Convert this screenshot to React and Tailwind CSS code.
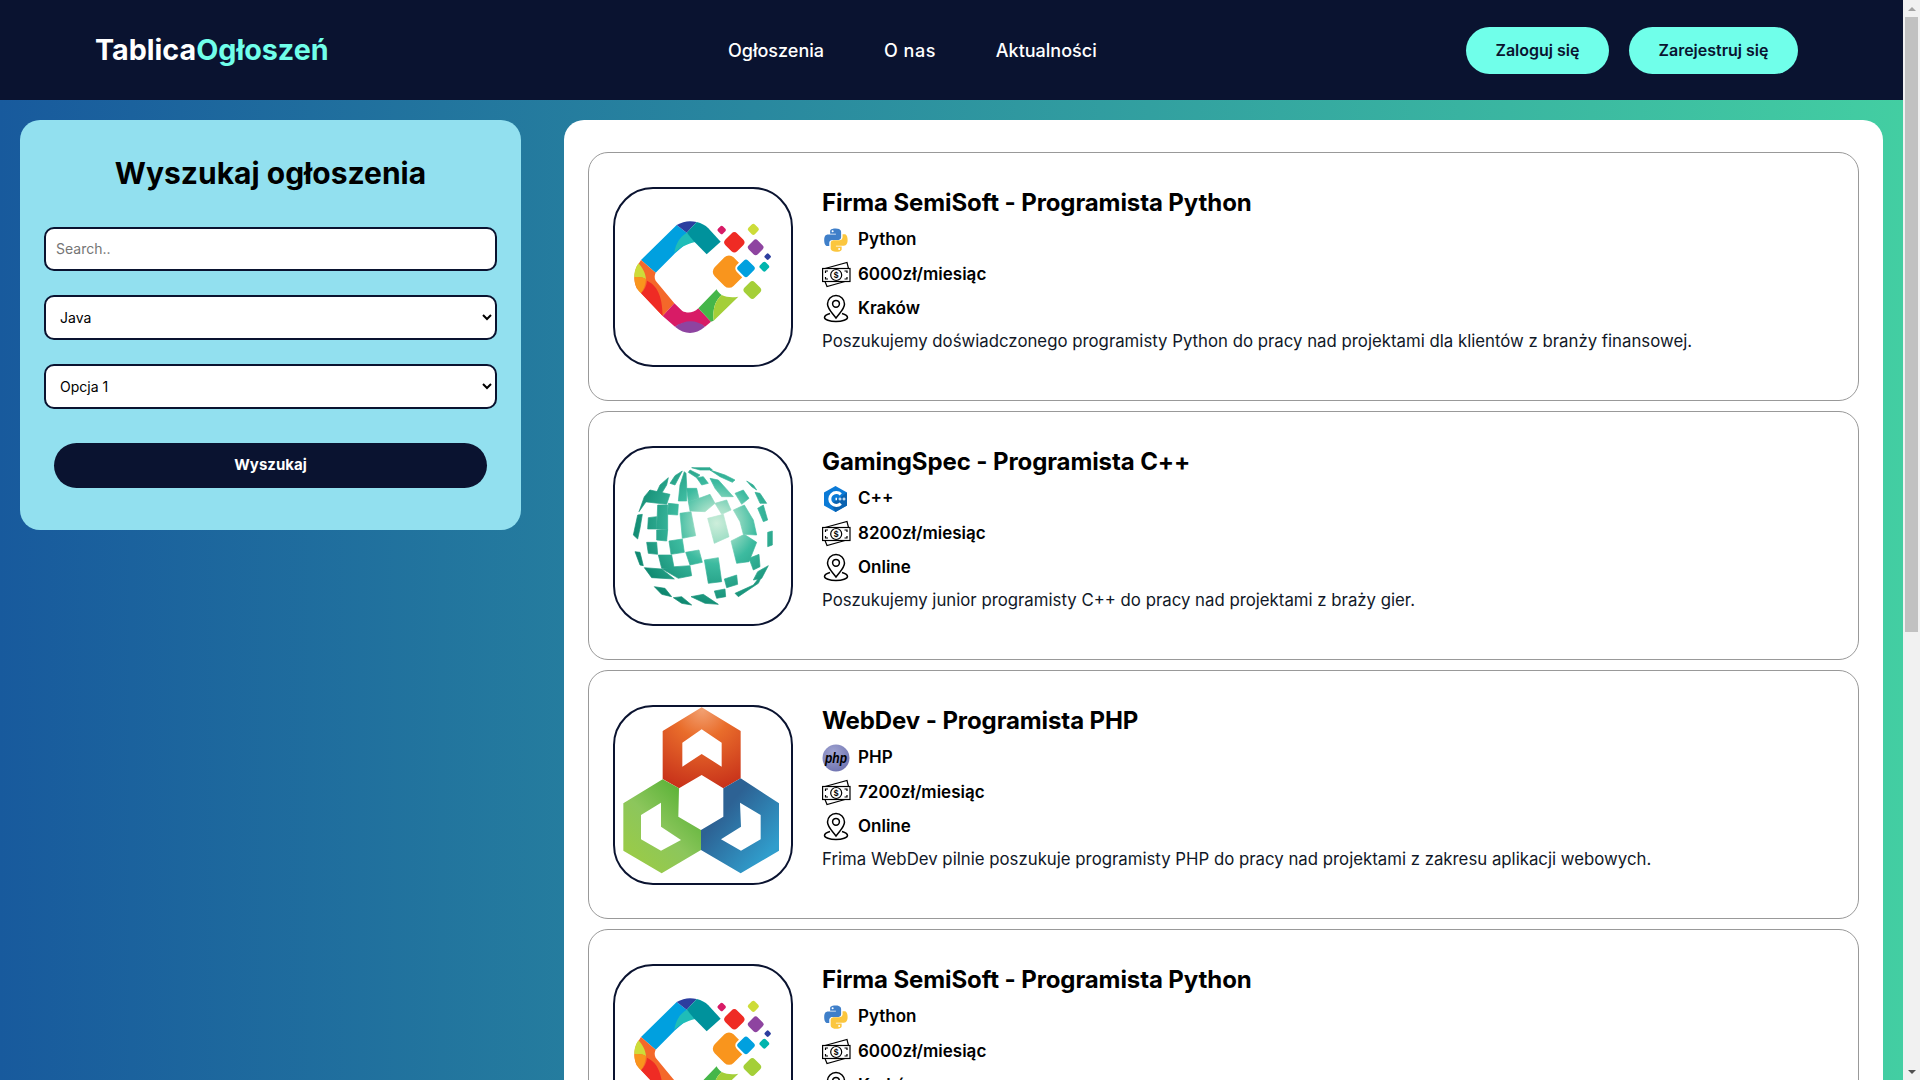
import React from "react";

function Diamond({ x, y, d, fill, stroke }) {
  const s = d * 1.6;
  return (
    <rect
      x={x - s / 2}
      y={y - s / 2}
      width={s}
      height={s}
      rx={s * 0.24}
      fill={fill}
      stroke={stroke}
      strokeWidth={stroke ? 6 : 0}
      transform={`rotate(45 ${x} ${y})`}
    />
  );
}

function SemiLogo() {
  return (
    <svg viewBox="-30 -63 528 528" className="block w-full h-full">
      <path d="M155 45 L48 150 L92 188 L150 130 L185 100 L205 92 L185 68 Z" fill="#00a0df" />
      <path d="M148 128 C152 100 165 80 185 68 L215 95 C195 98 170 108 148 128 Z" fill="#1fbdb8" />
      <path d="M155 45 C175 33 195 31 215 36 L185 68 Z" fill="#2c3e9f" />
      <path d="M215 36 C230 40 240 45 250 55 L287 95 L245 133 L208 95 L185 68 Z" fill="#00929c" />
      <path d="M48 150 L35 170 C26 190 26 215 35 235 L113 318 L148 280 L92 212 C88 205 88 195 92 188 Z" fill="#f4682a" />
      <path d="M40 160 C30 175 27 190 28 202 C42 200 55 202 63 208 C62 190 52 172 40 160 Z" fill="#cddc39" />
      <path d="M28 202 C28 220 34 238 48 250 C55 240 62 225 63 208 C55 202 42 200 28 202 Z" fill="#f9951d" />
      <path d="M66 212 C95 225 112 255 113 318 L48 250 C58 240 65 228 66 212 Z" fill="#ef2b24" />
      <path d="M113 318 L148 280 L172 303 C185 310 205 310 220 295 L258 335 L240 350 C210 332 180 332 150 350 Z" fill="#d81b66" />
      <path d="M150 350 C180 328 215 328 240 350 C210 375 180 375 150 350 Z" fill="#8e44a0" />
      <path d="M220 295 L275 238 C278 245 283 250 290 255 C272 270 262 295 266 332 L258 335 Z" fill="#45b649" />
      <path d="M266 332 C262 295 272 270 290 255 C305 262 322 263 340 260 Z" fill="#a4cf38" />
      <Diamond x={290} y={60} d={13} fill="#d81b66" />
      <Diamond x={328} y={97} d={31} fill="#ef2b24" />
      <Diamond x={385} y={58} d={17} fill="#cddc39" />
      <Diamond x={392} y={112} d={24} fill="#8e44a0" />
      <Diamond x={428} y={140} d={10} fill="#2c3e9f" />
      <Diamond x={418} y={170} d={15} fill="#00b5ad" />
      <Diamond x={312} y={185} d={50} fill="#f9951d" />
      <Diamond x={363} y={175} d={30} fill="#00a0df" stroke="#ffffff" />
      <Diamond x={382} y={240} d={27} fill="#a4cf38" />
    </svg>
  );
}

const SPHERE = [
  "172,48 150,62 135,85 150,90", "178,50 165,90 160,138 185,138 185,90 183,55", "130,68 105,90 95,112 110,115 125,90",
  "195,45 225,60 215,68 190,52", "255,45 300,60 330,75 322,82 285,65", "200,38 255,38 262,45 225,45",
  "75,105 135,118 125,148 58,140", "58,125 75,105 62,142 42,170", "130,145 160,148 158,180 128,178",
  "185,100 215,100 222,130 190,140", "222,130 255,118 270,145 240,170 195,168 190,140", "255,70 280,75 325,125 290,125 270,100",
  "215,68 235,65 250,85 230,90", "330,115 355,105 372,130 350,148", "270,145 305,135 318,165 290,178",
  "325,165 358,150 385,195 395,240 355,238 345,200", "248,190 295,178 312,245 268,265", "98,150 128,150 128,225 95,222",
  "70,188 95,185 95,222 68,222", "95,225 128,225 125,258 95,255", "165,175 198,170 212,242 172,250",
  "38,180 52,178 45,220 38,252 25,240", "65,262 95,262 98,298 70,295", "132,258 172,252 178,292 138,298",
  "100,300 140,300 148,342 110,340", "182,292 222,285 232,322 195,330", "238,315 280,308 290,380 250,385",
  "318,258 358,238 395,262 372,320 335,325", "30,290 45,292 55,332 45,330", "58,338 110,342 148,372 80,368",
  "112,342 150,335 195,332 200,362 160,370", "298,372 335,360 338,388 305,398", "372,310 402,298 405,335 385,345",
  "398,350 430,332 410,370 385,375", "398,160 415,150 428,195 415,200", "390,112 405,115 425,145 405,145",
  "365,78 385,90 395,105 380,95", "428,232 442,228 442,270 428,275", "88,395 120,400 140,425 110,418",
  "145,428 170,425 200,450 170,445", "198,425 235,418 280,448 240,445", "268,408 300,402 302,425 275,430",
  "330,415 385,390 420,345 400,385 340,425",
];

function SphereLogo() {
  return (
    <svg viewBox="-30 -21 528 528" className="block w-full h-full">
      <defs>
        <radialGradient id="sphereGrad" gradientUnits="userSpaceOnUse" cx="275" cy="205" r="270">
          <stop offset="0" stopColor="#cdeedb" />
          <stop offset="0.18" stopColor="#a5e0c8" />
          <stop offset="0.45" stopColor="#3dbba0" />
          <stop offset="1" stopColor="#0b846c" />
        </radialGradient>
      </defs>
      {SPHERE.map((p) => (
        <polygon key={p} points={p} fill="url(#sphereGrad)" stroke="url(#sphereGrad)" strokeWidth="2" strokeLinejoin="round" />
      ))}
    </svg>
  );
}

function HexLogo() {
  return (
    <svg viewBox="0 21 528 528" className="block w-full h-full">
      <defs>
        <radialGradient id="hexO" gradientUnits="userSpaceOnUse" cx="262" cy="30" r="240">
          <stop offset="0" stopColor="#f2a071" />
          <stop offset="0.35" stopColor="#e96d2b" />
          <stop offset="1" stopColor="#c8321a" />
        </radialGradient>
        <linearGradient id="hexG" gradientUnits="userSpaceOnUse" x1="40" y1="470" x2="220" y2="290">
          <stop offset="0" stopColor="#9acb47" />
          <stop offset="0.5" stopColor="#8cc65c" />
          <stop offset="1" stopColor="#5db339" />
        </linearGradient>
        <linearGradient id="hexB" gradientUnits="userSpaceOnUse" x1="330" y1="330" x2="470" y2="450">
          <stop offset="0" stopColor="#2d6294" />
          <stop offset="1" stopColor="#309dcc" />
        </linearGradient>
      </defs>
      <path fillRule="evenodd" fill="url(#hexO)" d="M260 22 L377 93 L377 235 L325 265 L260 225 L192 265 L143 237 L143 93 Z M260 88 L202 128 L202 200 L260 162 L320 200 L320 128 Z" />
      <path fillRule="evenodd" fill="url(#hexG)" d="M143 238 L192 265 L190 350 L258 390 L258 450 L140 520 L25 452 L25 310 Z M138 308 L78 345 L78 418 L138 452 L198 420 L138 380 Z" />
      <path fillRule="evenodd" fill="url(#hexB)" d="M325 265 L377 235 L492 310 L492 452 L377 520 L258 450 L258 390 L325 350 Z M375 308 L378 380 L318 418 L378 452 L437 418 L437 345 Z" />
    </svg>
  );
}

function PythonIcon() {
  return (
    <svg viewBox="0 0 30 30" className="block w-[30px] h-[30px]">
      <g transform="translate(2 3.200) scale(0.186)">
        <path fill="#3f7fc9" d="M63.4 1C31 1 33 15 33 15l.04 14.5H64v4.4H20.6S1 31.6 1 64.2 18.1 95.6 18.1 95.6h10.2V80.5S27.7 63.4 45.1 63.4h30.6s16.3.3 16.3-15.8V20.9S94.5 1 63.4 1zM46.4 10.4a5.5 5.5 0 1 1 0 11 5.5 5.5 0 0 1 0-11z" />
        <path fill="#fbc63e" transform="rotate(180 64 64)" d="M63.4 1C31 1 33 15 33 15l.04 14.5H64v4.4H20.6S1 31.6 1 64.2 18.1 95.6 18.1 95.6h10.2V80.5S27.7 63.4 45.1 63.4h30.6s16.3.3 16.3-15.8V20.9S94.5 1 63.4 1zM46.4 10.4a5.5 5.5 0 1 1 0 11 5.5 5.5 0 0 1 0-11z" />
      </g>
    </svg>
  );
}

function CppIcon() {
  return (
    <svg viewBox="0 0 30 30" className="block w-[30px] h-[30px]">
      <polygon points="13.500,2 25,8.500 25,21.500 13.500,28 2,21.500 2,8.500" fill="#0b7ad6" />
      <polygon points="25,8.500 25,21.500 13.500,28 9,20" fill="#0a62b0" />
      <path d="M18.800 10.300a6.500 6.500 0 1 0 0 9.400" fill="none" stroke="#ffffff" strokeWidth="3" />
      <path d="M13.500 13.800h1.500v2.400h-1.500z" fill="#ffffff" />
      <path d="M16.500 15h3M18 13.500v3M20.500 15h3M22 13.500v3" stroke="#ffffff" strokeWidth="1" />
    </svg>
  );
}

function PhpIcon() {
  return (
    <svg viewBox="0 0 30 30" className="block w-[30px] h-[30px]">
      <defs>
        <radialGradient id="phpG" cx="0.4" cy="0.3" r="0.8">
          <stop offset="0" stopColor="#a0a4d2" />
          <stop offset="1" stopColor="#6c70ae" />
        </radialGradient>
      </defs>
      <circle cx="14" cy="15" r="13.500" fill="url(#phpG)" />
      <text x="14" y="19.500" textAnchor="middle" fontSize="15" fontStyle="italic" fontWeight="700" fontFamily="'Liberation Sans', sans-serif" fill="#000000" textLength="22" lengthAdjust="spacingAndGlyphs">php</text>
    </svg>
  );
}

function MoneyIcon() {
  return (
    <svg viewBox="0 0 30 30" fill="none" stroke="#000000" strokeWidth="1.200" className="block w-[30px] h-[30px]">
      <path d="M3 8.500 L25 2.500 L26.500 8.500" />
      <path d="M3 21.500 L5 26.500 L23 21.500" />
      <rect x="0.600" y="8.500" width="27.400" height="13" />
      <circle cx="14.200" cy="15" r="5.500" />
      <path d="M3.500 13 V11 H6 M3.500 17 V19 H6 M25 13 V11 H22.500 M25 17 V19 H22.500" />
      <text x="14.200" y="18" textAnchor="middle" fontSize="8.500" fontWeight="700" stroke="none" fill="#000000" fontFamily="'Liberation Sans', sans-serif">$</text>
    </svg>
  );
}

function PinIcon() {
  return (
    <svg viewBox="0 0 30 30" fill="none" stroke="#000000" strokeWidth="1.500" className="block w-[30px] h-[30px]">
      <path d="M14 1.500a8.500 8.500 0 0 0-8.500 8.500c0 5 5 9 8.500 14 3.500-5 8.500-9 8.500-14a8.500 8.500 0 0 0-8.500-8.500z" />
      <circle cx="14" cy="9.800" r="3.400" />
      <path d="M8 19.500C4.500 20.500 2.500 22 2.500 23.500c0 2 5 4 11.500 4s11.500-2 11.500-4c0-1.500-2-3-5.500-4" />
    </svg>
  );
}

const JOBS = [
  { logo: <SemiLogo />, title: "Firma SemiSoft - Programista Python", icon: <PythonIcon />, skill: "Python", pay: "6000zł/miesiąc", city: "Kraków", desc: "Poszukujemy doświadczonego programisty Python do pracy nad projektami dla klientów z branży finansowej." },
  { logo: <SphereLogo />, title: "GamingSpec - Programista C++", icon: <CppIcon />, skill: "C++", pay: "8200zł/miesiąc", city: "Online", desc: "Poszukujemy junior programisty C++ do pracy nad projektami z braży gier." },
  { logo: <HexLogo />, title: "WebDev - Programista PHP", icon: <PhpIcon />, skill: "PHP", pay: "7200zł/miesiąc", city: "Online", desc: "Frima WebDev pilnie poszukuje programisty PHP do pracy nad projektami z zakresu aplikacji webowych." },
  { logo: <SemiLogo />, title: "Firma SemiSoft - Programista Python", icon: <PythonIcon />, skill: "Python", pay: "6000zł/miesiąc", city: "Kraków", desc: "Poszukujemy doświadczonego programisty Python do pracy nad projektami dla klientów z branży finansowej." },
];

function JobCard({ job }) {
  return (
    <article className="flex shrink-0 h-[249px] gap-[29px] rounded-[20px] border border-[#999999] bg-white pl-[24px] pt-[30px]">
      <div className="mt-[4px] w-[180px] h-[180px] shrink-0 overflow-hidden rounded-[40px] border-2 border-[#0a1330] bg-white">
        {job.logo}
      </div>
      <div className="flex flex-col text-black">
        <h2 className="flex h-[38px] items-center pt-px text-[24px] font-bold tracking-[-0.1px]">{job.title}</h2>
        <div className="flex h-[36px] items-center gap-[6px] pt-px text-[17px] font-semibold">{job.icon}<span>{job.skill}</span></div>
        <div className="flex h-[35px] items-center gap-[6px] text-[17px] font-semibold">
          <MoneyIcon />
          <span>{job.pay}</span>
        </div>
        <div className="flex h-[34px] items-center gap-[6px] text-[17px] font-semibold">
          <PinIcon />
          <span>{job.city}</span>
        </div>
        <p className="flex h-[32px] items-center text-[16.800px] font-normal text-[#111827]">{job.desc}</p>
      </div>
    </article>
  );
}

export default function App() {
  return (
    <div className="flex h-screen w-full overflow-hidden bg-[#f1f1f1] font-[Inter,sans-serif]">
      <div className="flex h-full flex-1 flex-col overflow-hidden bg-[linear-gradient(to_right,#185a9d,#43cea2)]">
        <header className="flex h-[100px] shrink-0 items-center bg-[#0a1330] pl-[95px] pr-[105px]">
          <div className="w-[633px] text-[28.700px] font-bold text-white">
            Tablica<span className="text-[#70ffea]">Ogłoszeń</span>
          </div>
          <nav className="flex flex-1 gap-[60px] text-[18px] font-medium text-white">
            <a>Ogłoszenia</a>
            <a className="tracking-[0.5px]">O nas</a>
            <a>Aktualności</a>
          </nav>
          <div className="flex gap-[20px] text-[16px] font-semibold text-[#0a1330]">
            <button className="h-[47px] w-[143px] rounded-full bg-[#70ffea]">Zaloguj się</button>
            <button className="h-[47px] w-[169px] rounded-full bg-[#70ffea]">Zarejestruj się</button>
          </div>
        </header>
        <main className="flex min-h-0 flex-1 items-start gap-[43px] px-[20px] pt-[20px]">
          <aside className="flex h-[410px] w-[501px] shrink-0 flex-col rounded-[20px] bg-[#92e0ef] px-[24px]">
            <h1 className="flex h-[107px] items-center justify-center text-[30px] font-bold text-black">Wyszukaj ogłoszenia</h1>
            <input
              placeholder="Search.."
              className="h-[44px] shrink-0 rounded-[10px] border-2 border-[#0a1330] bg-white px-[10px] pb-[2px] text-[14px] text-black placeholder:text-[#757575]"
            />
            <select className="mt-[24px] h-[45px] shrink-0 rounded-[10px] border-2 border-[#0a1330] bg-white pl-[10px] text-[14px] text-black">
              <option>Java</option>
            </select>
            <select className="mt-[24px] h-[45px] shrink-0 rounded-[10px] border-2 border-[#0a1330] bg-white pl-[10px] text-[14px] text-black">
              <option>Opcja 1</option>
            </select>
            <button className="mx-[10px] mt-[34px] h-[45px] shrink-0 rounded-full bg-[#0a1330] text-[15px] font-bold text-white">Wyszukaj</button>
          </aside>
          <section className="flex h-[1000px] flex-1 flex-col gap-[10px] rounded-[20px] bg-white px-[24px] pt-[32px]">
            {JOBS.map((job, i) => (
              <JobCard key={i} job={job} />
            ))}
          </section>
        </main>
      </div>
      <div className="flex h-full w-[17px] shrink-0 flex-col items-center bg-[#f1f1f1]">
        <div className="flex h-[17px] w-full shrink-0 items-center justify-center">
          <div className="h-0 w-0 border-x-[4px] border-b-[4px] border-x-transparent border-b-[#a3a3a3]" />
        </div>
        <div className="h-[615px] w-[13px] shrink-0 bg-[#c1c1c1]" />
        <div className="flex-1" />
        <div className="flex h-[17px] w-full shrink-0 items-center justify-center">
          <div className="h-0 w-0 border-x-[4px] border-t-[4px] border-x-transparent border-t-[#505050]" />
        </div>
      </div>
    </div>
  );
}
